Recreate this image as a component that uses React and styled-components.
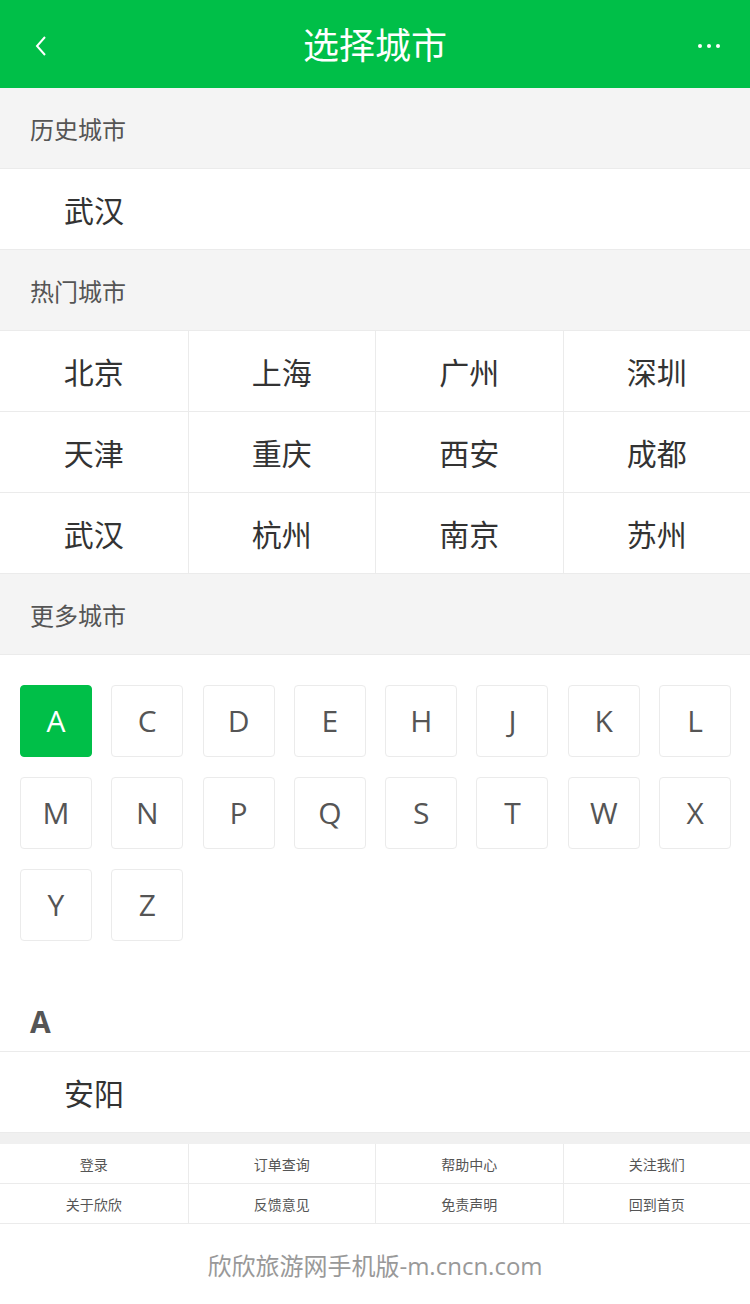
import React from 'react'
import styled, { createGlobalStyle } from 'styled-components'

const GlobalStyle = createGlobalStyle`
  body {
    margin: 0;
    background: #fff;
    font-family: "Open Sans", "Noto Sans CJK SC", sans-serif;
  }
`

const Header = styled.div`
  height: 88px;
  background: #00bf48;
  display: grid;
  grid-template-columns: 100px 1fr 100px;
  align-items: center;
  color: #fff;
`

const Title = styled.h1`
  margin: 0;
  font-size: 36px;
  font-weight: normal;
  line-height: 92px;
  text-align: center;
`

const IconBtn = styled.div`
  display: flex;
  align-items: center;
  justify-content: ${p => (p.$right ? 'flex-end' : 'flex-start')};
  padding: ${p => (p.$right ? '0 29px 0 0' : '0 0 0 34px')};
`

const SectionTitle = styled.div`
  height: 80px;
  line-height: 83px;
  background: #f4f4f4;
  padding-left: 30px;
  font-size: 24px;
  color: #555;
  border-bottom: 1px solid #ebebeb;
`

const CityRow = styled.div`
  height: 80px;
  line-height: 83px;
  padding-left: 64px;
  font-size: 30px;
  color: #333;
  border-bottom: 1px solid #ebebeb;
`

const HotGrid = styled.div`
  display: grid;
  grid-template-columns: repeat(4, 1fr);
`

const HotCell = styled.div`
  height: 80px;
  line-height: 83px;
  text-align: center;
  font-size: 30px;
  color: #333;
  border-bottom: 1px solid #ebebeb;
  border-left: ${p => (p.$first ? 'none' : '1px solid #ebebeb')};
`

const Letters = styled.div`
  display: grid;
  grid-template-columns: repeat(8, 72px);
  column-gap: 19.3px;
  row-gap: 20px;
  padding: 30px 20px 0;
`

const Letter = styled.div`
  height: 72px;
  box-sizing: border-box;
  border: 1px solid ${p => (p.$active ? '#00bf48' : '#ebebeb')};
  border-radius: 4px;
  background: ${p => (p.$active ? '#00bf48' : '#fff')};
  color: ${p => (p.$active ? '#fff' : '#555')};
  font-size: 30px;
  display: flex;
  align-items: center;
  justify-content: center;
  padding-bottom: 2px;
`

const LetterHead = styled.div`
  padding: 50px 0 0 30px;
  height: 60px;
  line-height: 62px;
  font-size: 30px;
  font-weight: bold;
  color: #555;
  border-bottom: 1px solid #ebebeb;
`

const Gap = styled.div`
  height: 11px;
  background: #f0f0f0;
`

const LinkGrid = styled.div`
  display: grid;
  grid-template-columns: repeat(4, 1fr);
`

const LinkCell = styled.div`
  height: 39px;
  line-height: 41px;
  text-align: center;
  font-size: 14px;
  color: #555;
  border-bottom: 1px solid #ebebeb;
  border-left: ${p => (p.$first ? 'none' : '1px solid #ebebeb')};
`

const Footer = styled.div`
  height: 80px;
  line-height: 84px;
  text-align: center;
  font-size: 24px;
  color: #999;
`

const hot = ['北京', '上海', '广州', '深圳', '天津', '重庆', '西安', '成都', '武汉', '杭州', '南京', '苏州']
const letters = ['A', 'C', 'D', 'E', 'H', 'J', 'K', 'L', 'M', 'N', 'P', 'Q', 'S', 'T', 'W', 'X', 'Y', 'Z']
const links = ['登录', '订单查询', '帮助中心', '关注我们', '关于欣欣', '反馈意见', '免责声明', '回到首页']

export default function App() {
  return (
    <div>
      <GlobalStyle />
      <Header>
        <IconBtn>
          <svg width="14" height="22" viewBox="0 0 14 22">
            <path d="M11 2 L3 11 L11 20" fill="none" stroke="#fff" strokeWidth="2" />
          </svg>
        </IconBtn>
        <Title>选择城市</Title>
        <IconBtn $right>
          <svg width="24" height="6" viewBox="0 0 24 6">
            <circle cx="3" cy="3" r="2" fill="#fff" />
            <circle cx="12" cy="3" r="2" fill="#fff" />
            <circle cx="21" cy="3" r="2" fill="#fff" />
          </svg>
        </IconBtn>
      </Header>

      <SectionTitle>历史城市</SectionTitle>
      <CityRow>武汉</CityRow>

      <SectionTitle>热门城市</SectionTitle>
      <HotGrid>
        {hot.map((c, i) => (
          <HotCell key={c + i} $first={i % 4 === 0}>{c}</HotCell>
        ))}
      </HotGrid>

      <SectionTitle>更多城市</SectionTitle>
      <Letters>
        {letters.map((l, i) => (
          <Letter key={l} $active={i === 0}>{l}</Letter>
        ))}
      </Letters>

      <LetterHead>A</LetterHead>
      <CityRow>安阳</CityRow>

      <Gap />
      <LinkGrid>
        {links.map((l, i) => (
          <LinkCell key={l} $first={i % 4 === 0}>{l}</LinkCell>
        ))}
      </LinkGrid>
      <Footer>欣欣旅游网手机版-m.cncn.com</Footer>
    </div>
  )
}
